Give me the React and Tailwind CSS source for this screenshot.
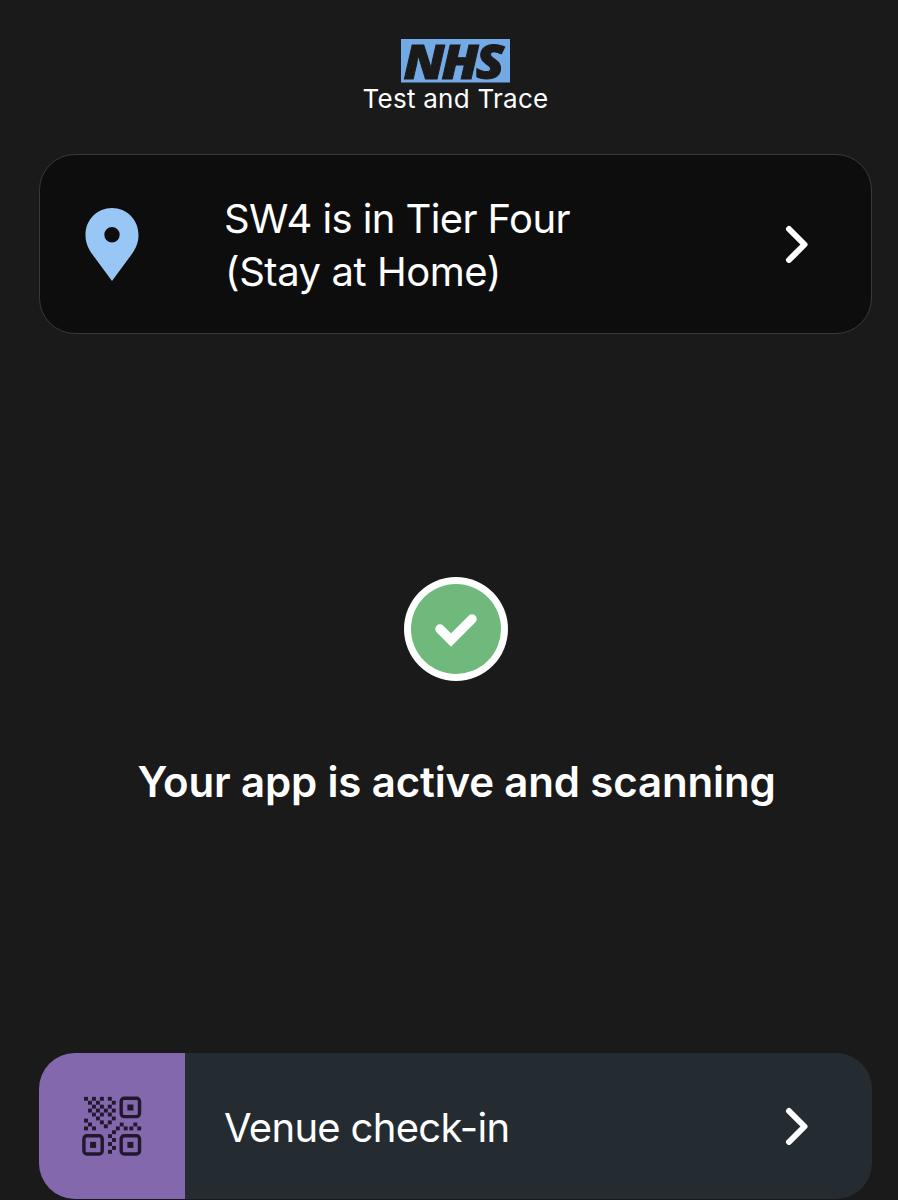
import React from "react";

const qrRows = [
  "#.#.#.#.",
  ".#.#...#",
  "..#.#.#.",
  ".#.#.#.#",
  "..#.#.#.",
  "...#...#",
  "....#.#.",
  ".....#..",
];

// centres of the loose dots around the main pattern
const qrDots = [
  [4, 24.6],
  [8, 28.5],
  [4, 32.4],
  [12, 32.4],
  [39.7, 28.5],
  [53.3, 28.5],
  [35.8, 32.4],
  [43.7, 32.4],
  [49.3, 32.4],
  [57.2, 32.4],
  [32, 36.2],
  [28, 40.1],
  [32, 44],
  [28, 48],
  [32, 51.9],
  [28, 55.8],
];

function NhsLogo() {
  return (
    <svg width="109" height="44" viewBox="0 0 109 44">
      <rect width="109" height="43.5" fill="#73a9e4" />
      <text
        transform="translate(2.4 39.6) scale(1.085 1)"
        fill="#1a1a1a"
        stroke="#1a1a1a"
        strokeWidth="0.9"
        className="font-['Open_Sans',sans-serif] text-[48px] font-extrabold italic tracking-[-2.8px]"
      >
        NHS
      </text>
    </svg>
  );
}

function PinIcon() {
  return (
    <svg width="54" height="73" viewBox="0 0 54 73" fill="#99c7f5">
      <path
        fillRule="evenodd"
        d="M27 0C12.200 0 .5 11.800 .5 27C.5 35 3.500 41 7.500 46.500L27 73L46.500 46.500C50.500 41 53.500 35 53.500 27C53.500 11.800 41.800 0 27 0zm0 19a7.700 7.700 0 1 1 0 15.400a7.700 7.700 0 1 1 0-15.400z"
      />
    </svg>
  );
}

function Chevron() {
  return (
    <svg
      width="24"
      height="38"
      viewBox="0 0 24 38"
      fill="none"
      stroke="white"
      strokeWidth="6"
      strokeLinecap="round"
      strokeLinejoin="round"
    >
      <path d="M4 4L19.500 19.500L4 35" />
    </svg>
  );
}

function Finder({ x, y }) {
  return (
    <g transform={`translate(${x} ${y})`}>
      <rect x="1.700" y="1.700" width="18.300" height="18.300" rx="3" fill="none" stroke="#21182c" strokeWidth="3.400" />
      <rect x="7.900" y="7.900" width="6" height="6" fill="#21182c" />
    </g>
  );
}

function Dot({ x, y }) {
  return <rect x={x - 1.95} y={y - 1.95} width="3.900" height="3.900" fill="#21182c" />;
}

function QrIcon() {
  return (
    <svg width="60" height="60" viewBox="0 0 60 60">
      {qrRows.map((row, r) =>
        row
          .split("")
          .map((cell, c) =>
            cell === "#" ? <Dot key={`${r}-${c}`} x={4 + c * 3.97} y={2.8 + r * 3.93} /> : null
          )
      )}
      {qrDots.map(([x, y]) => (
        <Dot key={`${x}-${y}`} x={x} y={y} />
      ))}
      <Finder x={37.5} y={0.6} />
      <Finder x={0.2} y={38} />
      <Finder x={37.5} y={38} />
    </svg>
  );
}

export default function App() {
  return (
    <div className="flex h-[1200px] w-[898px] flex-col overflow-hidden bg-[#1a1a1a] pl-[39px] pr-[26px] pt-[39px] font-[Inter,sans-serif] text-white">
      <header className="flex h-[115px] flex-col items-center">
        <NhsLogo />
        <p className="text-[26px] leading-8 tracking-[0.25px]">Test and Trace</p>
      </header>

      <button className="flex h-[180px] shrink-0 items-center rounded-[36px] border border-[#393939] bg-[#0d0d0d] text-left">
        <span className="flex w-[143px] justify-center">
          <PinIcon />
        </span>
        <span className="flex-1 pl-[41px] pt-px text-[40px] leading-[53px]">
          <span className="tracking-[-0.6px]">SW4 is in Tier Four</span>
          <br />
          <span className="pl-px tracking-[-0.45px]">(Stay at Home)</span>
        </span>
        <span className="pr-[62px]">
          <Chevron />
        </span>
      </button>

      <main className="flex h-[719px] shrink-0 flex-col items-center pt-[243px]">
        <svg width="104" height="104" viewBox="0 0 104 104">
          <circle cx="52" cy="52" r="52" fill="white" />
          <circle cx="52" cy="52" r="45" fill="#6fb97c" />
          <path d="M36 52l11 11L68 42" fill="none" stroke="white" strokeWidth="9.500" strokeLinecap="round" />
        </svg>
        <h1 className="mt-[75px] pl-0.5 text-[42px] font-semibold leading-[52px] tracking-[-0.15px]">
          Your app is active and scanning
        </h1>
      </main>

      <button className="flex h-[146px] shrink-0 items-center overflow-hidden rounded-[36px] bg-[#242b31] text-left">
        <span className="flex h-full w-[146px] items-center justify-center bg-[#8468ae]">
          <QrIcon />
        </span>
        <span className="flex-1 pl-[39px] pt-0.5 text-[40px] leading-[53px] tracking-[-0.7px]">
          Venue check-in
        </span>
        <span className="pr-[63px]">
          <Chevron />
        </span>
      </button>
    </div>
  );
}
